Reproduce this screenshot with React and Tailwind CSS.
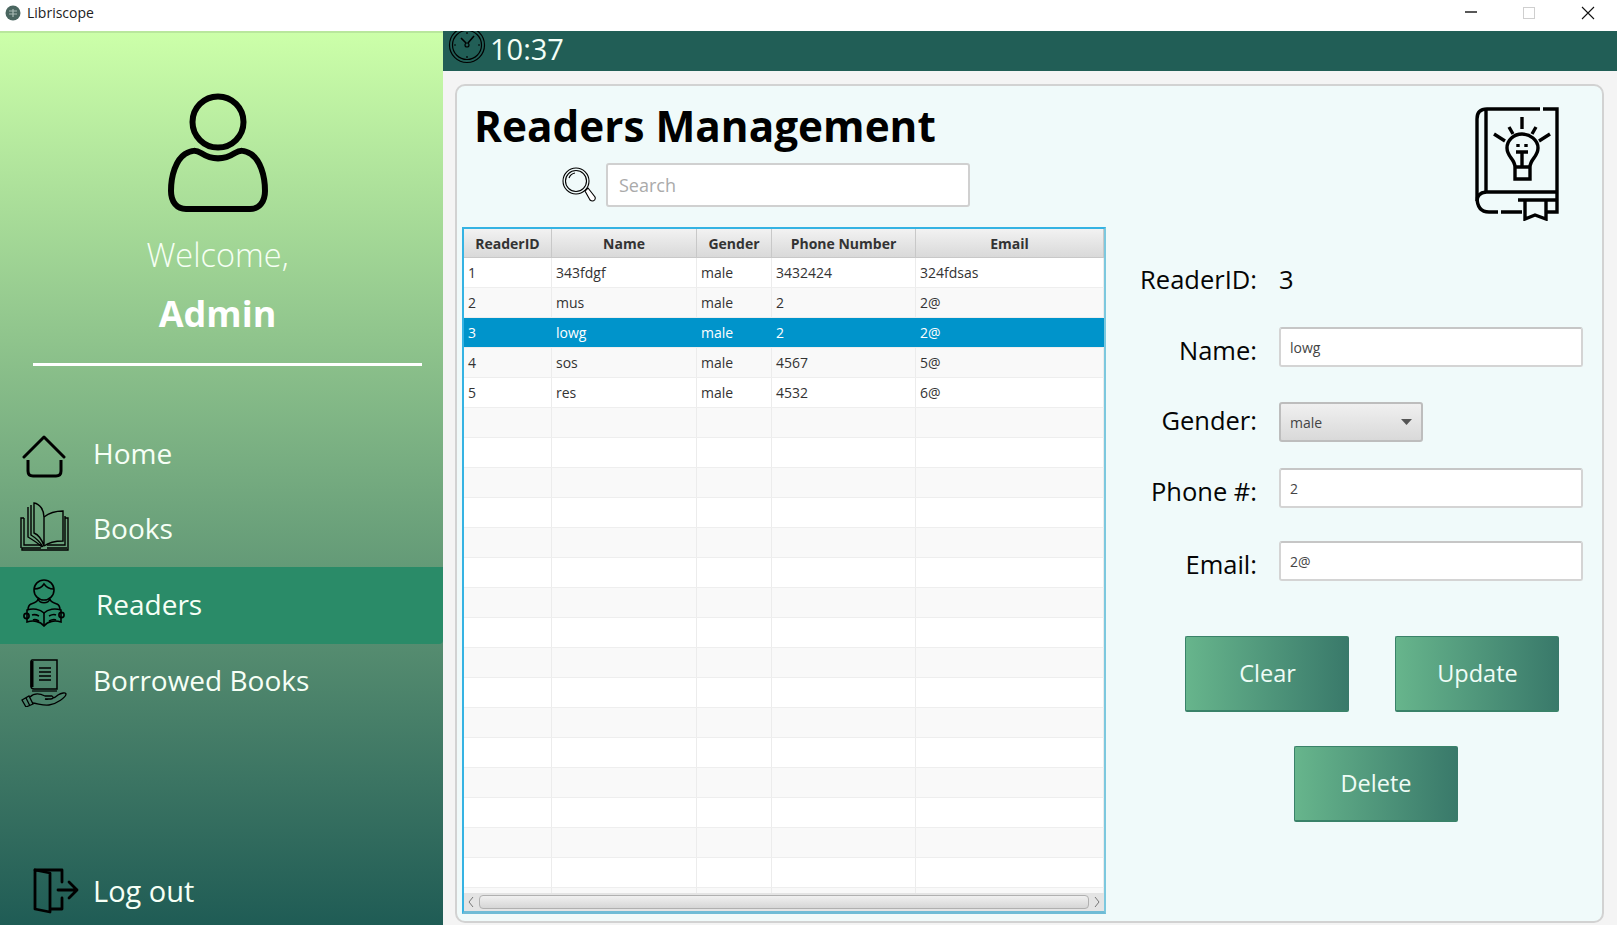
const rows = [
  ["1", "343fdgf", "male", "3432424", "324fdsas"],
  ["2", "mus", "male", "2", "2@"],
  ["3", "lowg", "male", "2", "2@"],
  ["4", "sos", "male", "4567", "5@"],
  ["5", "res", "male", "4532", "6@"],
  ...Array.from({ length: 17 }, () => ["", "", "", "", ""]),
];
const cols = ["w-[88px]", "w-[145px]", "w-[75px]", "w-[144px]", "flex-1"];
const heads = ["ReaderID", "Name", "Gender", "Phone Number", "Email"];

function Home() {
  return (
    <svg width="44" height="44" viewBox="0 0 44 44" fill="none" stroke="#000" strokeWidth="3">
      <path d="M2 22 L22 2 L42 22" strokeLinecap="round" strokeLinejoin="round" />
      <path d="M6 25 V36 Q6 41 11 41 H34 Q39 41 39 36 V25" />
    </svg>
  );
}
function Books() {
  return (
    <svg width="49" height="49" viewBox="0 0 49 49" fill="none" stroke="#000" strokeWidth="1.4">
      <path d="M14 1 C20 2 24 8 24 15 V44 C22 38 19 33 14 31 Z" />
      <path d="M11 3 V33 C16 36 20 40 23 45" />
      <path d="M8 5 V35 C13 38 18 41 22 45" />
      <path d="M24 15 C29 11 36 9 43 9 V39 C35 39 28 41 24 44" />
      <path d="M4 16 H1 V46" />
      <path d="M4 16 V43 H22 " />
      <path d="M45 14 V43 H27" />
      <path d="M45 16 H48 V48 H2 V46 H21 M27 46 H47" />
    </svg>
  );
}
function Reader() {
  return (
    <svg width="42" height="48" viewBox="0 0 42 48" fill="none" stroke="#000" strokeWidth="1.6">
      <circle cx="21" cy="11" r="10" />
      <path d="M11.5 10 C16 10 19 8 21 5 C24 9 27 10 30.5 10" />
      <path d="M15 20 C15 23 11 24 8 25 C6 26 5 28 5 31" />
      <path d="M27 20 C27 23 31 24 34 25 C36 26 37 28 37 31" />
      <path d="M15 20 C17 25 25 25 27 20" />
      <path d="M4 31 C10 29 17 30 21 34 C25 30 32 29 38 31 V43 C32 41 25 42 21 47 C17 42 10 41 4 43 Z" />
      <path d="M21 34 V47" />
      <circle cx="3.5" cy="37" r="2.6" />
      <circle cx="38.5" cy="36" r="2.6" />
      <path d="M9 36 C12 35 14 36 16 37 M10 41 C12 40 14 41 16 42 M26 37 C28 36 31 35 33 36 M26 42 C28 41 31 40 33 41" />
    </svg>
  );
}
function Borrow() {
  return (
    <svg width="46" height="48" viewBox="0 0 46 48" fill="none" stroke="#000">
      <path d="M11 1 H36 V30 H13 Q10 30 10 27 V3 Q10 1 11 1 Z" strokeWidth="1.5" />
      <path d="M11 2 V28" strokeWidth="3" />
      <path d="M18 9 H30 M18 13 H30 M18 17 H30 M18 21 H30" strokeWidth="1.3" />
      <path d="M11 32 H36" strokeWidth="1.2" />
      <path d="M9 38 C13 34 18 34 24 37 H31 C33 38 32 40 30 40 H24 C28 41 34 39 37 36 C40 34 45 33 45 35 C45 38 36 45 28 46 C22 47 16 44 11 44" strokeWidth="1.3" />
      <path d="M1 41 L8 37 L12 45 L5 48 Z M5 39 L9 47" strokeWidth="1.3" />
    </svg>
  );
}
function Logout() {
  return (
    <svg width="46" height="46" viewBox="0 0 46 46" fill="none" stroke="#000" strokeWidth="2.8" strokeLinejoin="round" strokeLinecap="round">
      <path d="M2 2 L17 5 V44 L2 41 Z" />
      <path d="M2 2 H29 V14 M29 30 V41 H18" />
      <path d="M25 22 H44 M36 14 L44 22 L36 30" />
    </svg>
  );
}
function User() {
  return (
    <svg width="100" height="122" viewBox="0 0 100 122" fill="none" stroke="#000" strokeWidth="6">
      <circle cx="50" cy="31" r="25.5" />
      <path d="M17 63 C24 59 28 59 33 62 C44 69 56 69 67 62 C72 59 76 59 83 63 C92 69 97 84 97 100 C97 111 91 118 82 118 H18 C9 118 3 111 3 100 C3 84 8 69 17 63 Z" />
    </svg>
  );
}
function Clock() {
  return (
    <svg width="38" height="38" viewBox="0 0 38 38" fill="none" stroke="#000" strokeWidth="1.2" className="shrink-0">
      <circle cx="19" cy="19" r="17.5" />
      <circle cx="19" cy="19" r="14.5" />
      <circle cx="19" cy="19" r="2" />
      <path d="M18 17 L13 12 M20 17 L26 10" strokeWidth="1.6" />
      <path d="M19 6 V8 M19 30 V32 M6 19 H8 M30 19 H32" />
    </svg>
  );
}
function Lens() {
  return (
    <svg width="34" height="36" viewBox="0 0 34 36" fill="none" stroke="#000" strokeWidth="1.1">
      <circle cx="14" cy="14" r="13" />
      <circle cx="14" cy="14" r="10.5" />
      <path d="M23 24 L26 21 L33 30 Q34 33 31 34 Q29 34 28 33 Z" fill="#fff" />
      <path d="M7 11 A8 8 0 0 1 13 6" />
    </svg>
  );
}
function BookIdea() {
  return (
    <svg width="84" height="114" viewBox="0 0 84 114" fill="none" stroke="#000" strokeWidth="3.4">
      <path d="M65 2 H12 Q2 2 2 12 V90 Q2 105 14 105 H23 M26 105 H47" />
      <path d="M68 2 H82 V105 H72 M82 93 H43" />
      <path d="M11 2 V85 H82" />
      <path d="M11 85 Q2 86 2 94" />
      <path d="M50 93 V112 L60 108 L71 112 V93" />
      <path d="M47 10 V22 M34 20 L38 27 M61 20 L57 27 M19 27 L30 34 M75 27 L64 34" />
      <path d="M40 69 V60 C40 52 32 50 32 41 C32 33 39 27 47 27 C55 27 63 33 63 41 C63 50 55 52 55 60 V72 H40 Z" />
      <path d="M41 45 H53 M47 45 V60 M39 60 H56" />
      <path d="M43 37 V40 M51 37 V40" />
    </svg>
  );
}
function NavItem({ icon, label, active, h, iconBox = "", textGap = "ml-[5px]" }) {
  return (
    <div className={`flex items-center ${h} ${active ? "bg-[#2a8b68] rounded-br-[4px]" : ""}`}>
      <div className={`w-[88px] flex justify-center shrink-0 ${iconBox}`}>{icon}</div>
      <span className={`${textGap} pb-[3px] text-[28px] text-[#f6fff6]`}>{label}</span>
    </div>
  );
}
function Field({ label, children, className = "", labelPad = "pt-[6px]" }) {
  return (
    <div className={`flex items-center ${className}`}>
      <span className={`w-[151px] ${labelPad} text-right text-[25.5px] leading-[30px] text-[#050505]`}>{label}</span>
      <div className="ml-[22px]">{children}</div>
    </div>
  );
}
function TextBox({ value }) {
  return (
    <input
      readOnly
      value={value}
      className="block w-[304px] h-[40px] rounded-[3px] border-2 border-[#d4d4d4] border-t-[#c6c6c6] bg-white px-[9px] text-[14px] text-[#444] outline-none"
    />
  );
}
function GreenButton({ children, className = "" }) {
  return (
    <button className={`w-[164px] h-[76px] rounded-[2px] border-b-2 border-l border-t border-[#3a8269] bg-gradient-to-r from-[#67b58c] to-[#39796a] text-[23.5px] text-[#effcf6] ${className}`}>
      {children}
    </button>
  );
}

export default function App() {
  return (
    <div className="flex flex-col w-[1617px] h-[925px] overflow-hidden bg-white [font-family:'Open_Sans',sans-serif]">
      <header className="flex items-center h-[31px] shrink-0 bg-white pl-[5px] pb-[6px]">
        <svg width="16" height="16" viewBox="0 0 16 16" className="shrink-0">
          <circle cx="8" cy="8" r="7.5" fill="#4a6660" />
          <path d="M4 6 H12 M4 9 H12 M8 4 V12" stroke="#a8bab4" strokeWidth="1.2" />
        </svg>
        <span className="ml-[6px] text-[14px] text-[#222]">Libriscope</span>
        <div className="ml-auto flex items-center">
          <svg width="14" height="14" viewBox="0 0 14 14" className="mr-[44px]"><path d="M1 6 H13" stroke="#111" strokeWidth="1.4" /></svg>
          <svg width="14" height="14" viewBox="0 0 14 14" className="mr-[45px]"><rect x="1.5" y="1.5" width="11" height="11" fill="none" stroke="#cfcfcf" /></svg>
          <svg width="14" height="14" viewBox="0 0 14 14" className="mr-[22px]"><path d="M1 1 L13 13 M13 1 L1 13" stroke="#111" strokeWidth="1.1" /></svg>
        </div>
      </header>

      <div className="flex flex-1 min-h-0">
        <aside className="flex flex-col w-[443px] shrink-0 border-t-2 border-t-[#b9e79d] bg-gradient-to-b from-[#ccffa9] to-[#1f5c55] text-white">
          <div className="flex flex-col items-center w-[435px] pt-[58px]">
            <User />
            <div className="mt-[20px] text-[32.5px] leading-[44px] font-light text-[#f6fff4]">Welcome,</div>
            <div className="mt-[14px] text-[36px] leading-[46px] font-bold">Admin</div>
          </div>
          <div className="mt-[26px] ml-[33px] w-[389px] h-[3px] bg-white shrink-0" />
          <nav className="mt-[51px] flex flex-col">
            <NavItem h="h-[75px]" iconBox="pt-[4px]" icon={<Home />} label="Home" />
            <NavItem h="h-[75px]" iconBox="pb-[6px]" icon={<Books />} label="Books" />
            <NavItem h="h-[77px]" iconBox="pb-[6px]" active icon={<Reader />} label="Readers" textGap="ml-[8px]" />
            <NavItem h="h-[74px]" iconBox="pt-[4px]" icon={<Borrow />} label="Borrowed Books" />
          </nav>
          <div className="mt-auto pb-[4px]">
            <div className="flex items-center h-[60px]">
              <div className="w-[88px] flex justify-end pr-[9px] shrink-0"><Logout /></div>
              <span className="ml-[5px] text-[29px] text-[#f6fff6]">Log out</span>
            </div>
          </div>
        </aside>

        <main className="flex flex-col flex-1 min-w-0 bg-[#f4f4f4]">
          <div className="flex items-start gap-[4px] h-[40px] shrink-0 bg-[#215e56] pl-[5px]">
            <div className="h-[40px] overflow-hidden">
              <div className="-mt-[5px]"><Clock /></div>
            </div>
            <span className="text-[29px] leading-[36px] text-[#f4fff8]">10:37</span>
          </div>
          <div className="flex flex-1 min-h-0 mt-[13px] ml-[12px] mr-[13px] mb-[2px] rounded-[10px] border-2 border-[#d2d2d2] bg-[#f0fafa]">
            <section className="flex flex-col w-[644px] ml-[5px] shrink-0 mb-[7px]">
              <h1 className="pl-[12px] mt-[10px] text-[42.3px] leading-[60px] font-bold text-black">Readers Management</h1>
              <div className="flex items-center mt-[7px] ml-[100px]">
                <Lens />
                <input
                  readOnly
                  placeholder="Search"
                  className="ml-[10px] w-[364px] h-[44px] rounded-[3px] border-2 border-[#d0d0d0] bg-white px-[11px] text-[18px] outline-none placeholder:text-[#aaa]"
                />
              </div>
              <div className="flex flex-col flex-1 min-h-0 mt-[20px] border-2 border-[#35b3e3] border-r-[#7cc8de] border-b-[3px] border-b-[#6fbcd6] bg-white overflow-hidden">
                <div className="flex h-[29px] shrink-0 bg-gradient-to-b from-[#f2f2f2] to-[#d9d9d9] border-b border-[#c8c8c8]">
                  {heads.map((h, i) => (
                    <div key={h} className={`${cols[i]} flex items-center justify-center border-r border-[#c8c8c8] text-[14px] font-bold text-[#333]`}>{h}</div>
                  ))}
                </div>
                <div className="flex-1 min-h-0 overflow-hidden">
                  {rows.map((r, i) => {
                    const sel = i === 2;
                    return (
                      <div key={i} className={`flex h-[30px] border-b border-[#eeeeee] ${sel ? "bg-[#0094cb] text-white" : i % 2 ? "bg-[#f9f9f9] text-[#333]" : "bg-white text-[#333]"}`}>
                        {r.map((c, j) => (
                          <div key={j} className={`${cols[j]} flex items-center pl-[4px] text-[14px] ${sel ? "" : "border-r border-[#ececec]"}`}>{c}</div>
                        ))}
                      </div>
                    );
                  })}
                </div>
                <div className="flex items-center h-[18px] shrink-0 bg-[#e4e4e4] px-[3px]">
                  <svg width="9" height="12" viewBox="0 0 9 12" fill="none" stroke="#777"><path d="M6 1 L2 6 L6 11" /></svg>
                  <div className="mx-[3px] flex-1 h-[14px] rounded-[4px] border border-[#b0b0b0] bg-gradient-to-b from-[#f0f0f0] to-[#d6d6d6]" />
                  <svg width="9" height="12" viewBox="0 0 9 12" fill="none" stroke="#777"><path d="M3 1 L7 6 L3 11" /></svg>
                </div>
              </div>
            </section>

            <section className="flex flex-col flex-1 min-w-0">
              <div className="flex justify-end pt-[21px] pr-[43px]"><BookIdea /></div>
              <div className="flex items-center mt-[38px] h-[40px]">
                <span className="w-[151px] text-right text-[25.5px] leading-[30px] text-[#050505]">ReaderID:</span>
                <span className="ml-[22px] text-[25.5px] leading-[30px] text-[#050505]">3</span>
              </div>
              <Field className="mt-[28px]" label="Name:"><TextBox value="lowg" /></Field>
              <Field className="mt-[35px]" labelPad="pb-[4px]" label="Gender:">
                <div className="flex items-center justify-between w-[144px] h-[40px] rounded-[3px] border-2 border-[#bdbdbd] bg-gradient-to-b from-[#f0f0f0] to-[#d9d9d9] pl-[9px] pr-[9px] text-[14px] text-[#444]">
                  <span>male</span>
                  <svg width="11" height="6" viewBox="0 0 11 6"><path d="M0 0 H11 L5.5 6 Z" fill="#555" /></svg>
                </div>
              </Field>
              <Field className="mt-[26px]" label="Phone #:"><TextBox value="2" /></Field>
              <Field className="mt-[33px]" label="Email:"><TextBox value="2@" /></Field>
              <div className="flex justify-between mt-[55px] pl-[79px] pr-[43px]">
                <GreenButton>Clear</GreenButton>
                <GreenButton>Update</GreenButton>
              </div>
              <div className="flex justify-center mt-[34px] pl-[43px]">
                <GreenButton>Delete</GreenButton>
              </div>
            </section>
          </div>
        </main>
      </div>
    </div>
  );
}
